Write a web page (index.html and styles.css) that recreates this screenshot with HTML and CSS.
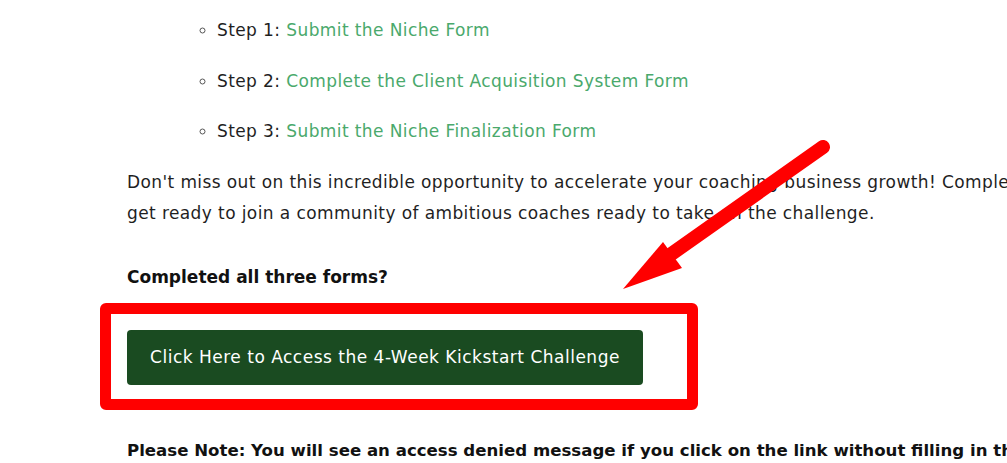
FILE: index.html
```html
<!DOCTYPE html>
<html lang="en">
<head>
    <meta charset="UTF-8">
    <meta name="viewport" content="width=device-width, initial-scale=1.0">
    <title>Kickstart Challenge</title>
    <link rel="stylesheet" href="styles.css">
</head>
<body>
    <div class="page">
        <div class="content">
            <ul class="steps">
                <li>Step 1: <a href="#">Submit the Niche Form</a></li>
                <li>Step 2: <a href="#">Complete the Client Acquisition System Form</a></li>
                <li>Step 3: <a href="#">Submit the Niche Finalization Form</a></li>
            </ul>

            <p class="intro">Don't miss out on this incredible opportunity to accelerate your coaching business growth! Complete the forms and get ready to join a community of ambitious coaches ready to take on the challenge.</p>

            <p class="question">Completed all three forms?</p>

            <div class="cta-wrap">
                <a href="#" class="cta-btn">Click Here to Access the 4-Week Kickstart Challenge</a>
                <div class="highlight-box"></div>
            </div>

            <p class="note">Please Note: You will see an access denied message if you click on the link without filling in the forms above.</p>
        </div>

        <!-- annotation arrow pointing at the button -->
        <svg class="arrow" width="260" height="200" viewBox="0 0 260 200">
            <line x1="223" y1="17" x2="60" y2="132" stroke="#ff0000" stroke-width="14" stroke-linecap="round"/>
            <polygon points="23,159 63,112 82,138" fill="#ff0000"/>
        </svg>
    </div>
</body>
</html>
```

FILE: styles.css
```css
* {
    margin: 0;
    padding: 0;
    box-sizing: border-box;
}

body {
    font-family: 'DejaVu Sans', sans-serif;
    background: #ffffff;
    color: #1f1f1f;
    overflow: hidden;
}

.page {
    position: relative;
    width: 1007px;
    height: 463px;
    overflow: hidden;
}

.content {
    width: 1180px;
    padding: 15px 0 0 127px;
    font-size: 17px;
    letter-spacing: 0.4px;
    line-height: 31px;
}

.steps {
    list-style: circle;
    padding-left: 90px;
}

.steps li {
    margin-bottom: 19.5px;
}

.steps li::marker {
    color: #555;
    font-size: 16px;
}

.steps a {
    color: #4aa96c;
    text-decoration: none;
}

.intro {
    margin-top: 0;
}

.question {
    margin-top: 33px;
    font-weight: 700;
    letter-spacing: 0;
    color: #111;
}

.cta-wrap {
    position: relative;
    margin-top: 37px;
    height: 55px;
}

.cta-btn {
    display: inline-block;
    width: 516px;
    height: 55px;
    line-height: 55px;
    text-align: center;
    background: #1a4b21;
    color: #ffffff;
    border-radius: 4px;
    font-size: 17px;
    letter-spacing: 0.5px;
    text-decoration: none;
}

.highlight-box {
    position: absolute;
    left: -27px;
    top: -27px;
    width: 598px;
    height: 107px;
    border: 11px solid #ff0000;
    border-radius: 6px;
}

.note {
    margin-top: 50.5px;
    font-weight: 700;
    font-size: 16.6px;
    letter-spacing: 0;
    color: #111;
    white-space: nowrap;
}

.arrow {
    position: absolute;
    left: 600px;
    top: 130px;
}
```
